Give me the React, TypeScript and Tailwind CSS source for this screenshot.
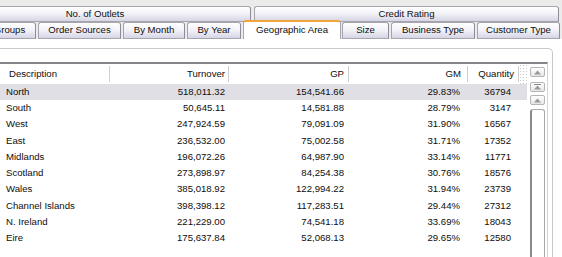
const rows = [
  ["North", "518,011.32", "154,541.66", "29.83%", "36794"],
  ["South", "50,645.11", "14,581.88", "28.79%", "3147"],
  ["West", "247,924.59", "79,091.09", "31.90%", "16567"],
  ["East", "236,532.00", "75,002.58", "31.71%", "17352"],
  ["Midlands", "196,072.26", "64,987.90", "33.14%", "11771"],
  ["Scotland", "273,898.97", "84,254.38", "30.76%", "18576"],
  ["Wales", "385,018.92", "122,994.22", "31.94%", "23739"],
  ["Channel Islands", "398,398.12", "117,283.51", "29.44%", "27312"],
  ["N. Ireland", "221,229.00", "74,541.18", "33.69%", "18043"],
  ["Eire", "175,637.84", "52,068.13", "29.65%", "12580"],
];

const tabBase =
  "flex items-center justify-center shrink-0 rounded-t-[3px] border border-[#a6a5ad] border-r-[#8e8d97] bg-[linear-gradient(to_bottom,#ffffff_0%,#f3f3f8_45%,#d6d5e6_100%)] whitespace-nowrap";

function Tab({ label, className }: { label: string; className: string }) {
  return <div className={`${tabBase} ${className}`}>{label}</div>;
}

function UpButton({ top }: { top?: boolean }) {
  return (
    <div className="w-[15px] h-[10px] rounded-[2px] border border-[#b5b5b8] bg-[linear-gradient(to_bottom,#ffffff,#e6e6ea)] flex items-center justify-center">
      <svg width="9" height="7" viewBox="0 0 9 7">
        {top && <rect x="1" y="0" width="7" height="1" fill="#8a8a80" />}
        <polygon points="4.5,1.5 8,5.5 1,5.5" fill="#9a9a8e" />
      </svg>
    </div>
  );
}

function HeaderCell({
  label,
  width,
  right,
  gap,
}: {
  label: string;
  width: string;
  right?: boolean;
  gap: string;
}) {
  return (
    <div className={`${width} flex items-center h-full`}>
      <span className={`flex-1 ${right ? "text-right" : "pl-[9px]"} ${gap}`}>{label}</span>
      <span className="w-px h-[16px] bg-[#cfcfd2]" />
    </div>
  );
}

export default function App() {
  return (
    <div className="w-[562px] h-[257px] overflow-hidden bg-white font-['Liberation_Sans',Arial,sans-serif] text-[9.6px] text-[#0e0e0e]">
      {/* tab strip */}
      <div className="h-[39px] bg-[#ebebeb] pt-[6px] overflow-hidden">
        <div className="flex h-[16px] gap-[3px] ml-[-61px]">
          <Tab label="No. of Outlets" className="w-[312px]" />
          <Tab label="Credit Rating" className="w-[305px]" />
        </div>
        <div className="flex h-[17px] gap-[2px] ml-[-17px] items-end">
          <Tab label="Groups" className="w-[53px] h-[17px]" />
          <Tab label="Order Sources" className="w-[83px] h-[17px]" />
          <Tab label="By Month" className="w-[62px] h-[17px]" />
          <Tab label="By Year" className="w-[54px] h-[17px]" />
          <div className="relative z-10 w-[98px] h-[19px] shrink-0 flex items-center justify-center rounded-t-[3px] border border-b-0 border-[#a6a5ad] border-t-2 border-t-[#f2a43a] bg-white pb-[1px] whitespace-nowrap">
            Geographic Area
          </div>
          <Tab label="Size" className="w-[47px] h-[17px] ml-[-1px]" />
          <Tab label="Business Type" className="w-[84px] h-[17px]" />
          <Tab label="Customer Type" className="w-[83px] h-[17px]" />
        </div>
      </div>

      {/* tab page */}
      <div className="h-[218px] bg-white pt-[9px]">
        <div className="ml-[-10px] w-[563px] h-[220px] border-t border-r border-[#c9c9cc] rounded-tr-[5px] pl-[10px] pr-[4px] pt-[13px]">
          <div className="w-[548px] h-[200px] border-t-2 border-t-[#85858a] border-r border-r-[#d4d4d8] flex">
            {/* data */}
            <div className="w-[527px] flex flex-col">
              <div className="h-[20px] flex">
                <HeaderCell label="Description" width="w-[110px]" gap="" />
                <HeaderCell label="Turnover" width="w-[119px]" right gap="mr-[3px]" />
                <HeaderCell label="GP" width="w-[120px]" right gap="mr-[4px]" />
                <HeaderCell label="GM" width="w-[119px]" right gap="mr-[6px]" />
                <HeaderCell label="Quantity" width="w-[51px]" right gap="mr-[4px]" />
                <div className="w-[8px] h-full bg-[radial-gradient(#c9c9cc_0.7px,transparent_0.9px)] bg-size-[3px_3px]" />
              </div>
              {rows.map((r, i) => (
                <div
                  key={r[0]}
                  className={`h-[16.25px] flex items-center ${i === 0 ? "bg-[#e0dfe5]" : ""}`}
                >
                  <div className="w-[110px] pl-[6px]">{r[0]}</div>
                  <div className="w-[119px] pr-[4px] text-right">{r[1]}</div>
                  <div className="w-[120px] pr-[5px] text-right">{r[2]}</div>
                  <div className="w-[119px] pr-[8px] text-right">{r[3]}</div>
                  <div className="w-[51px] pr-[8px] text-right">{r[4]}</div>
                  <div className="w-[8px]" />
                </div>
              ))}
            </div>
            {/* navigation column */}
            <div className="w-[20px] flex flex-col pl-[3px] pt-[3px]">
              <UpButton />
              <div className="h-[5px]" />
              <UpButton top />
              <div className="h-[3px]" />
              <UpButton />
              <div className="h-[4px]" />
              <div className="w-[15px] flex-1 rounded-t-[3px] border-l-2 border-l-[#8a8a8e] border-t border-r border-[#a9a9ad] bg-white" />
            </div>
          </div>
        </div>
      </div>
    </div>
  );
}
